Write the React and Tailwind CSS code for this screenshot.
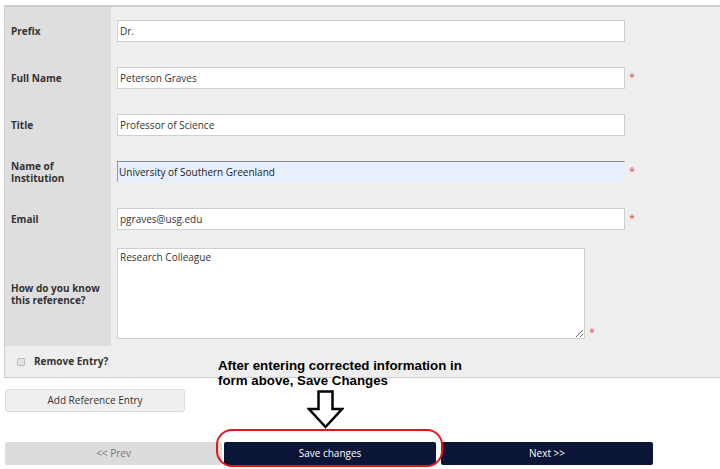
const Star = ({ className = "" }) => (
  <span className={`ml-[4px] text-[11px] leading-none text-[#d9534f] ${className}`}>*</span>
);

const Row = ({ label, children, h = "h-[47px]" }) => (
  <div className={`flex ${h}`}>
    <div className="w-[106px] bg-[#dedede] px-[6px] flex items-center">
      <span className="text-[10px] font-bold leading-[12px] whitespace-nowrap text-[#333]">{label}</span>
    </div>
    <div className="flex-1 pl-[6px] flex items-center">{children}</div>
  </div>
);

const Field = ({ value, focused }) => (
  <input
    readOnly
    value={value}
    className={
      focused
        ? "w-[508px] h-[21px] px-[1px] text-[10px] text-[#222] bg-[#e8f0fe] border border-[#e8f0fe] border-t-[#888] border-l-[#999] outline-none"
        : "w-[508px] h-[22px] px-[2px] text-[10px] text-[#333] bg-white border border-[#cfcfcf] outline-none"
    }
  />
);

export default function App() {
  return (
    <div
      className="relative w-[720px] h-[469px] overflow-hidden bg-white"
      style={{ fontFamily: "'Open Sans', sans-serif" }}
    >
      <div className="ml-[4px] mt-[5px] w-[730px] bg-[#eeeeee] border-t-2 border-l border-b border-[#cdcdcd]">
        <Row label="Prefix">
          <Field value="Dr." />
        </Row>
        <Row label="Full Name">
          <Field value="Peterson Graves" />
          <Star className="-mt-[2px]" />
        </Row>
        <Row label="Title">
          <Field value="Professor of Science" />
        </Row>
        <Row label={<>Name of<br />Institution</>}>
          <Field value="University of Southern Greenland" focused />
          <Star className="-mt-[2px]" />
        </Row>
        <Row label="Email">
          <Field value="pgraves@usg.edu" />
          <Star className="-mt-[2px]" />
        </Row>
        <div className="flex h-[104px]">
          <div className="w-[106px] bg-[#dedede] px-[6px] flex items-center">
            <span className="text-[10px] font-bold leading-[12px] whitespace-nowrap text-[#333]">
              How do you know<br />this reference?
            </span>
          </div>
          <div className="flex-1 pl-[6px] pt-[6px] flex items-end pb-[7px]">
            <textarea
              readOnly
              value="Research Colleague"
              className="w-[468px] h-[91px] px-[2px] py-[1px] text-[10px] leading-[14px] text-[#333] bg-white border border-[#cfcfcf] outline-none resize-y"
            />
            <Star className="mb-[2px]" />
          </div>
        </div>
        <div className="h-[31px] flex items-center pl-[12px]">
          <span className="w-[8px] h-[8px] rounded-[2px] border border-[#bbb] bg-[#e4e4e4]" />
          <span className="ml-[9px] text-[10px] font-bold text-[#333]">Remove Entry?</span>
        </div>
      </div>

      <button className="ml-[5px] mt-[11px] w-[180px] h-[23px] rounded-[3px] bg-[#efefef] border border-[#dadada] text-[10px] text-[#333]">
        Add Reference Entry
      </button>

      <div className="ml-[5px] mt-[30px] flex h-[23px]">
        <button className="w-[217px] h-full bg-[#dcdcdc] text-[10px] text-[#777] rounded-[2px]">
          &lt;&lt; Prev
        </button>
        <button className="ml-[2px] w-[212px] h-full bg-[#0b1538] text-[10px] text-white rounded-[2px]">
          Save changes
        </button>
        <button className="ml-[5px] w-[212px] h-full bg-[#0b1538] text-[10px] text-white rounded-[2px]">
          Next &gt;&gt;
        </button>
      </div>

      <div
        className="absolute left-[218px] top-[358px] text-[13.3px] font-bold leading-[15px] text-black"
        style={{ fontFamily: "'Liberation Sans', Arial, sans-serif" }}
      >
        After entering corrected information in
        <br />
        form above, Save Changes
      </div>

      <svg className="absolute left-[307px] top-[390px]" width="37" height="39" viewBox="0 0 37 39">
        <path
          d="M11.5 1.5 H25.5 V19 H35 L18.5 37 L2 19 H11.5 Z"
          fill="white"
          stroke="black"
          strokeWidth="2.5"
          strokeLinejoin="miter"
        />
      </svg>

      <div className="absolute left-[216px] top-[429px] w-[227px] h-[38px] rounded-[16px] border-2 border-[#e4151b]" />
    </div>
  );
}
